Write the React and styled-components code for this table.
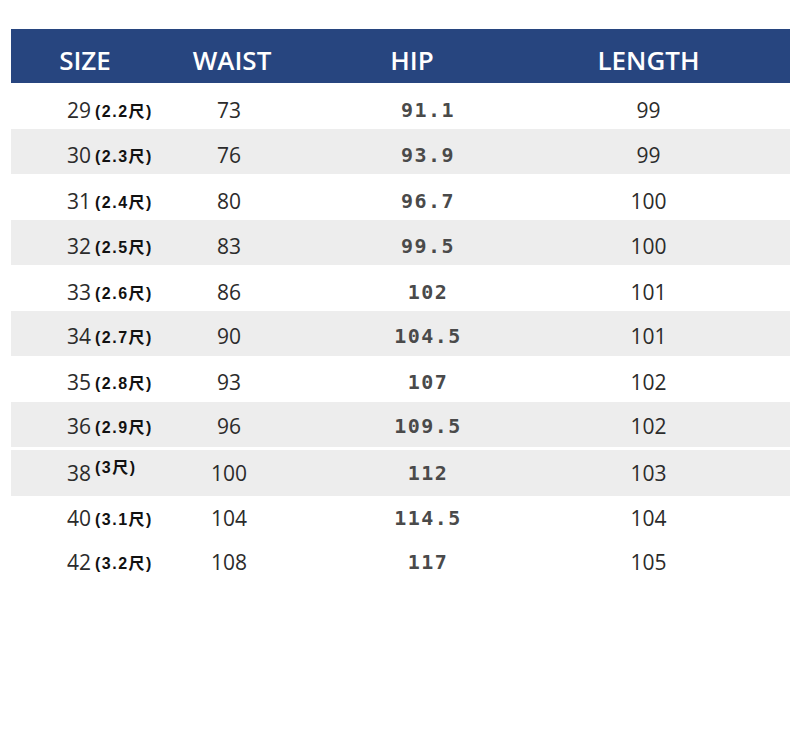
import React from 'react';
import styled, { createGlobalStyle } from 'styled-components';

const GlobalStyle = createGlobalStyle`
  html, body {
    margin: 0;
    padding: 0;
    background: #fff;
  }
  body {
    font-family: "Open Sans", "Noto Sans", sans-serif;
  }
`;

// dy: how far the text sits below the middle of its band
const rows = [
  { size: '29', shi: '2.2尺', waist: '73', hip: '91.1', length: '99', shade: false, dy: 8 },
  { size: '30', shi: '2.3尺', waist: '76', hip: '93.9', length: '99', shade: true, dy: 8 },
  { size: '31', shi: '2.4尺', waist: '80', hip: '96.7', length: '100', shade: false, dy: 8 },
  { size: '32', shi: '2.5尺', waist: '83', hip: '99.5', length: '100', shade: true, dy: 8 },
  { size: '33', shi: '2.6尺', waist: '86', hip: '102', length: '101', shade: false, dy: 8 },
  { size: '34', shi: '2.7尺', waist: '90', hip: '104.5', length: '101', shade: true, dy: 6 },
  { size: '35', shi: '2.8尺', waist: '93', hip: '107', length: '102', shade: false, dy: 6 },
  { size: '36', shi: '2.9尺', waist: '96', hip: '109.5', length: '102', shade: true, dy: 4 },
  { size: '38', shi: '3尺', waist: '100', hip: '112', length: '103', shade: true, gap: true, raised: true, dy: 0 },
  { size: '40', shi: '3.1尺', waist: '104', hip: '114.5', length: '104', shade: false, dy: 0, short: true },
  { size: '42', shi: '3.2尺', waist: '108', hip: '117', length: '105', shade: false, dy: 0, short: true },
];

const Page = styled.div`
  width: 800px;
  height: 737px;
  padding: 29px 10px 0 11px;
  box-sizing: border-box;
  background: #fff;
`;

const Grid = styled.div`
  display: grid;
  grid-template-columns: 148px 146px 214px 1fr;
  align-items: center;
`;

const HeaderRow = styled(Grid)`
  height: 54px;
  background: #27457f;
  color: #fff;
  font-family: "Open Sans", "Noto Sans", sans-serif;
  font-size: 26px;
  font-weight: 600;
`;

const HeadCell = styled.div`
  text-align: center;
  padding-top: 8px;
  padding-right: ${p => p.$shift || 0}px;
`;

const Row = styled(Grid)`
  height: ${p => (p.$short ? 44 : 45.5)}px;
  margin-top: ${p => (p.$gap ? 3 : 0)}px;
  background: ${p => (p.$shade ? '#ededed' : '#fff')};
  color: #2b2b2b;
  font-family: "Open Sans", "Noto Sans", sans-serif;
  font-size: 21px;

  & > div {
    padding-top: ${p => p.$dy}px;
  }
`;

const SizeCell = styled.div`
  padding-left: 56px;
  display: flex;
  align-items: flex-start;
`;

const Shi = styled.span`
  font-family: "Liberation Sans", "Noto Sans CJK SC", sans-serif;
  font-size: 16px;
  font-weight: 700;
  color: #111;
  margin-left: 4px;
  margin-top: ${p => (p.$raised ? -5 : 2)}px;
  letter-spacing: 1.5px;
`;

const WaistCell = styled.div`
  text-align: center;
  padding-right: 6px;
`;

const HipCell = styled.div`
  text-align: center;
  padding-left: 32px;
  font-family: "DejaVu Sans Mono", "Liberation Mono", monospace;
  font-weight: 700;
  font-size: 20px;
  letter-spacing: 1.5px;
  color: #4a4a4a;
`;

const LengthCell = styled.div`
  text-align: center;
  padding-right: 12px;
`;

export default function App() {
  return (
    <Page>
      <GlobalStyle />
      <HeaderRow>
        <HeadCell>SIZE</HeadCell>
        <HeadCell>WAIST</HeadCell>
        <HeadCell>HIP</HeadCell>
        <HeadCell $shift={12}>LENGTH</HeadCell>
      </HeaderRow>
      {rows.map(r => (
        <Row key={r.size} $shade={r.shade} $gap={r.gap} $dy={r.dy} $short={r.short}>
          <SizeCell>
            {r.size}
            <Shi $raised={r.raised}>({r.shi})</Shi>
          </SizeCell>
          <WaistCell>{r.waist}</WaistCell>
          <HipCell>{r.hip}</HipCell>
          <LengthCell>{r.length}</LengthCell>
        </Row>
      ))}
    </Page>
  );
}
